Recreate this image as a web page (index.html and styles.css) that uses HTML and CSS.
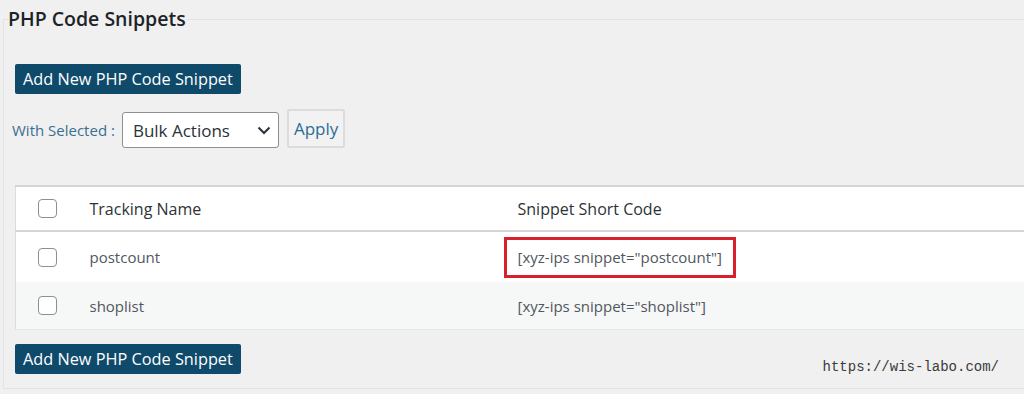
FILE: index.html
```html
<!DOCTYPE html>
<html lang="ja">

<head>
    <meta charset="UTF-8">
    <meta name="viewport" content="width=device-width, initial-scale=1.0">
    <title>PHP Code Snippets</title>
    <link rel="stylesheet" href="styles.css">
</head>

<body>
    <fieldset class="panel">
        <legend class="panel-title">PHP Code Snippets</legend>

        <div class="panel-body">
            <button type="button" class="btn-add">Add New PHP Code Snippet</button>

            <!-- Bulk actions -->
            <div class="bulk-row">
                <label for="bulkAction" class="bulk-label">With Selected :</label>
                <div class="select-wrap">
                    <select id="bulkAction" class="bulk-select">
                        <option>Bulk Actions</option>
                    </select>
                    <svg class="select-arrow" width="14" height="9" viewBox="0 0 14 9">
                        <path d="M1.5 1.5 L7 7 L12.5 1.5" fill="none" stroke="#2c3338" stroke-width="2" />
                    </svg>
                </div>
                <button type="button" class="btn-apply">Apply</button>
            </div>

            <!-- Snippet list -->
            <table class="snippets">
                <thead>
                    <tr>
                        <th class="col-check"><span class="check"></span></th>
                        <th class="col-name">Tracking Name</th>
                        <th class="col-code">Snippet Short Code</th>
                    </tr>
                </thead>
                <tbody>
                    <tr>
                        <td class="col-check"><span class="check"></span></td>
                        <td class="col-name">postcount</td>
                        <td class="col-code"><span class="highlight">[xyz-ips snippet="postcount"]</span></td>
                    </tr>
                    <tr class="alt">
                        <td class="col-check"><span class="check"></span></td>
                        <td class="col-name">shoplist</td>
                        <td class="col-code">[xyz-ips snippet="shoplist"]</td>
                    </tr>
                </tbody>
            </table>

            <div class="footer-row">
                <button type="button" class="btn-add">Add New PHP Code Snippet</button>
                <span class="watermark">https://wis-labo.com/</span>
            </div>
        </div>
    </fieldset>
</body>

</html>
```

FILE: styles.css
```css
body {
    font-family: 'Open Sans', 'Noto Sans', sans-serif;
    margin: 0;
    padding: 0;
    height: 100vh;
    overflow: hidden;
    background-color: #f0f0f1;
}

.panel {
    width: 1100px;
    box-sizing: border-box;
    margin: 7px 0 0 3px;
    padding: 0 0 13px 4px;
    border: 1px solid #e3e3e4;
}

.panel-title {
    padding: 0;
    font-size: 19.5px;
    line-height: 24px;
    font-weight: 600;
    color: #1d2327;
}

.panel-body {
    padding-left: 7px;
    padding-top: 33px;
}

.btn-add {
    display: block;
    height: 30px;
    padding: 0 8px;
    background-color: #0f4a6b;
    color: #fff;
    border: none;
    border-radius: 2px;
    font-family: inherit;
    font-size: 16.3px;
    cursor: pointer;
}

.bulk-row {
    display: flex;
    align-items: center;
    margin-top: 18px;
    margin-left: -3px;
}

.bulk-label {
    color: #3a6f8f;
    font-size: 15px;
    margin-right: 7px;
}

.select-wrap {
    position: relative;
}

.bulk-select {
    appearance: none;
    width: 157px;
    height: 36px;
    padding: 0 30px 0 10px;
    background-color: #fff;
    border: 1px solid #8c8f94;
    border-radius: 3px;
    font-family: inherit;
    font-size: 17px;
    color: #2c3338;
}

.select-arrow {
    position: absolute;
    right: 8px;
    top: 14px;
    pointer-events: none;
}

.btn-apply {
    height: 39px;
    margin-left: 8px;
    margin-top: -4px;
    padding: 0 5px;
    background-color: #f2f2f3;
    border: 2px solid #dcdcde;
    border-radius: 2px;
    color: #2b6c93;
    font-family: inherit;
    font-size: 17px;
    cursor: pointer;
}

.snippets {
    width: 1100px;
    margin-top: 37px;
    border-collapse: collapse;
    background-color: #fff;
    border-top: 2px solid #d5d5d6;
    border-left: 1px solid #dcdcde;
    border-bottom: 1px solid #e6e6e7;
    color: #50575e;
    font-size: 15px;
    text-align: left;
}

.snippets th {
    height: 41px;
    font-weight: normal;
    font-size: 16px;
    color: #2c3338;
    border-bottom: 2px solid #d5d5d6;
}

.snippets td {
    height: 48px;
}

.snippets tr.alt td {
    height: 45px;
    background-color: #f6f7f7;
}

.col-check {
    width: 60px;
    padding: 0 0 0 22px;
    box-sizing: border-box;
}

.col-name {
    width: 413px;
    padding-left: 14px;
}

.col-code {
    padding-left: 14px;
}

.check {
    display: block;
    width: 17px;
    height: 17px;
    border: 1px solid #8c8f94;
    border-radius: 4px;
    background-color: #fff;
}

.highlight {
    display: inline-block;
    margin-left: -14px;
    padding: 7px 11px 8px 11px;
    border: 3px solid #d7202c;
}

.footer-row {
    display: flex;
    align-items: center;
    justify-content: space-between;
    margin-top: 13px;
}

.watermark {
    margin-right: 116px;
    margin-top: 16px;
    font-family: 'Liberation Mono', monospace;
    font-size: 14px;
    color: #3a3a3a;
}
```
